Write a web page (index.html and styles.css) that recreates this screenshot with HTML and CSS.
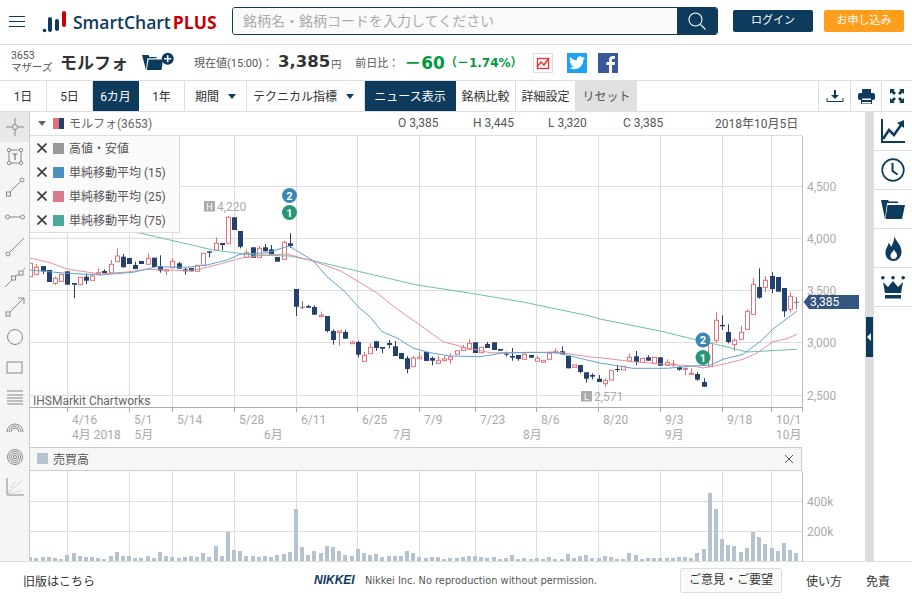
FILE: index.html
```html
<!DOCTYPE html>
<html>
<head>
<meta charset="utf-8">
<title>SmartChart PLUS</title>
<link rel="stylesheet" href="styles.css">
</head>
<body>
<div class="page">

<header class="top">
	<a class="menu" href="#"><span></span><span></span><span></span></a>
	<a class="logo" href="#">
		<svg class="logo-mark" width="26" height="22" viewBox="0 0 26 22">
			<circle cx="3.5" cy="19.5" r="1.8" fill="#0d3b5e"/>
			<rect x="7" y="6" width="4" height="15" rx="2" fill="#0d3b5e"/>
			<rect x="14" y="8" width="4" height="12" rx="2" fill="#0d3b5e"/>
			<rect x="21" y="0" width="4" height="16" rx="2" fill="#c8000a"/>
		</svg>
		<span class="logo-name">SmartChart</span><span class="logo-plus">PLUS</span>
	</a>
	<div class="search">
		<input class="search-input" type="text" placeholder="銘柄名・銘柄コードを入力してください">
		<button class="search-btn">
			<svg width="20" height="20" viewBox="0 0 20 20"><circle cx="8.5" cy="8.5" r="6.5" fill="none" stroke="#fff" stroke-width="1.1"/><path d="M13.5 13.5l5 5" stroke="#fff" stroke-width="1.1"/></svg>
		</button>
	</div>
	<a class="btn btn-login" href="#">ログイン</a>
	<a class="btn btn-apply" href="#">お申し込み</a>
</header>

<section class="info">
	<div class="code"><div>3653</div><div>マザーズ</div></div>
	<div class="name">モルフォ</div>
	<svg class="folder-add" width="33" height="22" viewBox="0 0 33 22">
		<path d="M0 4h6.500l1 2h7v1.300H5.500L4 19z" fill="#0d3b5e"/>
		<path d="M6.500 8.500H21L19.500 19H4.800z" fill="#0d3b5e"/>
		<circle cx="25.700" cy="7.700" r="6" fill="#0d3b5e"/>
		<path d="M22.200 7.700h7M25.700 4.200v7" stroke="#fff" stroke-width="1.500"/>
	</svg>
	<div class="label label-now">現在値(15:00)：</div>
	<div class="price">3,385</div>
	<div class="yen">円</div>
	<div class="label label-prev">前日比：</div>
	<div class="change">－60</div>
	<div class="change-pct">（－1.74%）</div>
	<a class="share share-chart" href="#">
		<svg width="14" height="14" viewBox="0 0 14 14"><rect x="1.5" y="2.5" width="11" height="10" fill="none" stroke="#e33" stroke-width="1.3"/><path d="M1 11l4-5 3 3 5-7" fill="none" stroke="#e33" stroke-width="1.5"/></svg>
	</a>
	<a class="share share-tw" href="#">
		<svg width="16" height="14" viewBox="0 0 24 20"><path d="M24 2.4c-.9.4-1.8.7-2.8.8 1-.6 1.8-1.6 2.2-2.7-1 .6-2 1-3.100 1.200C19.300.7 18 0 16.600 0c-2.700 0-4.900 2.200-4.900 4.900 0 .4 0 .8.100 1.100C7.700 5.800 4.100 3.900 1.700.9c-.4.700-.7 1.600-.7 2.500 0 1.700.900 3.200 2.200 4.100-.8 0-1.600-.2-2.200-.6v.1c0 2.400 1.700 4.400 3.900 4.800-.4.100-.8.200-1.300.2-.3 0-.6 0-.9-.1.600 2 2.400 3.400 4.600 3.400-1.700 1.300-3.800 2.100-6.100 2.100-.4 0-.8 0-1.200-.1 2.200 1.400 4.800 2.200 7.500 2.200 9.100 0 14-7.500 14-14v-.6c1-.7 1.800-1.600 2.500-2.500z" fill="#fff"/></svg>
	</a>
	<a class="share share-fb" href="#">
		<svg width="20" height="20" viewBox="0 0 20 20"><path d="M14 20v-8h2.600l.4-3h-3V7.200c0-.9.300-1.500 1.500-1.500H17V3.100C16.700 3 15.800 3 14.800 3 12.500 3 11 4.300 11 6.800V9H8.400v3H11v8z" fill="#fff"/></svg>
	</a>
</section>

<nav class="tabs">
	<a class="tab tab-s" href="#">1日</a>
	<a class="tab tab-s" href="#">5日</a>
	<a class="tab tab-s is-on" href="#">6カ月</a>
	<a class="tab tab-s" href="#">1年</a>
	<a class="tab tab-period" href="#">期間<i class="caret"></i></a>
	<a class="tab tab-tech" href="#">テクニカル指標<i class="caret"></i></a>
	<a class="tab tab-news is-on" href="#">ニュース表示</a>
	<a class="tab tab-m" href="#">銘柄比較</a>
	<a class="tab tab-m" href="#">詳細設定</a>
	<a class="tab tab-reset" href="#">リセット</a>
	<a class="tab-icon tab-icon-first" href="#">
		<svg width="18" height="14" viewBox="0 0 18 14"><path d="M9 1v7" stroke="#0d3b5e" stroke-width="2"/><path d="M5 6h8l-4 4z" fill="#0d3b5e"/><path d="M1 9v3.500h16V9" fill="none" stroke="#0d3b5e"/></svg>
	</a>
	<a class="tab-icon" href="#">
		<svg width="17" height="15" viewBox="0 0 17 15"><rect x="4" y="0" width="9" height="4" fill="#0d3b5e"/><rect x="0" y="4" width="17" height="7" rx="2" fill="#0d3b5e"/><rect x="3.500" y="9" width="10" height="6" fill="#fff" stroke="#0d3b5e" stroke-width="1"/><rect x="4" y="11" width="9" height="2" fill="#0d3b5e"/></svg>
	</a>
	<a class="tab-icon tab-icon-last" href="#">
		<svg width="14" height="14" viewBox="0 0 14 14" fill="#0d3b5e"><path d="M0 0h5L3.500 1.500 6 4 4 6 1.500 3.500 0 5zM14 0v5l-1.500-1.500L10 6 8 4l2.500-2.500L9 0zM0 14V9l1.500 1.500L4 8l2 2-2.500 2.500L5 14zM14 14H9l1.500-1.500L8 10l2-2 2.500 2.500L14 9z"/></svg>
	</a>
</nav>

<main class="main">
	<aside class="tools">
		<a class="tool is-on" href="#"><svg viewBox="0 0 24 24"><circle cx="12" cy="12" r="2.500"/><path d="M12 3v6.500M12 14.500V21M3 12h6.500M14.500 12H21"/></svg></a>
		<a class="tool" href="#"><svg viewBox="0 0 24 24"><rect x="6" y="5" width="12" height="13"/><circle class="dot" cx="6" cy="5" r="1.700"/><circle class="dot" cx="18" cy="5" r="1.700"/><circle class="dot" cx="6" cy="18" r="1.700"/><circle class="dot" cx="18" cy="18" r="1.700"/><path class="strong" d="M9.500 9h5M12 9v6"/></svg></a>
		<a class="tool" href="#"><svg viewBox="0 0 24 24"><path d="M6.500 17.500l11-11"/><rect class="dot" x="3.500" y="17" width="4" height="4"/><circle class="dot" cx="19" cy="5" r="2"/></svg></a>
		<a class="tool" href="#"><svg viewBox="0 0 24 24"><path d="M6 12h12"/><circle class="dot" cx="4.500" cy="12" r="2"/><circle class="dot" cx="19.500" cy="12" r="2"/></svg></a>
		<a class="tool" href="#"><svg viewBox="0 0 24 24"><path d="M7 17L21 3"/><circle class="dot" cx="5" cy="19" r="2"/></svg></a>
		<a class="tool" href="#"><svg viewBox="0 0 24 24"><path d="M2 22l7-7M12 12l4-3M20 5l2-2"/><rect class="dot" x="8.500" y="11" width="4" height="4"/><rect class="dot" x="16" y="6" width="4" height="4"/></svg></a>
		<a class="tool" href="#"><svg viewBox="0 0 24 24"><path d="M7 17L21 3M15 3h6v6"/><rect class="dot" x="3" y="17" width="4" height="4"/></svg></a>
		<a class="tool" href="#"><svg viewBox="0 0 24 24"><circle cx="12" cy="12" r="7.500"/></svg></a>
		<a class="tool" href="#"><svg viewBox="0 0 24 24"><rect x="4" y="7" width="15" height="11"/></svg></a>
		<a class="tool" href="#"><svg viewBox="0 0 24 24"><path d="M4 6h16M4 10h16M4 13h16M4 16h16M4 19h16"/></svg></a>
		<a class="tool" href="#"><svg viewBox="0 0 24 24"><path d="M4 17a8 8 0 0 1 16 0M6 17a6 6 0 0 1 12 0M8 17a4 4 0 0 1 8 0"/></svg></a>
		<a class="tool" href="#"><svg viewBox="0 0 24 24"><circle cx="12" cy="12" r="7.500"/><circle cx="12" cy="12" r="5.500"/><circle cx="12" cy="12" r="3.500"/><circle cx="12" cy="12" r="1.500"/></svg></a>
		<a class="tool" href="#"><svg viewBox="0 0 24 24"><path d="M4 3v17h17"/><path class="thin" d="M4 20L19 5M4 20l15-5M4 20l8-14"/></svg></a>
	</aside>

	<div class="panel">
		<div class="chart-head">
			<i class="head-caret"></i>
			<span class="head-swatch"><b></b><b></b></span>
			<span class="head-name">モルフォ(3653)</span>
			<span class="ohlc">O 3,385</span>
			<span class="ohlc">H 3,445</span>
			<span class="ohlc">L 3,320</span>
			<span class="ohlc">C 3,385</span>
			<span class="head-date">2018年10月5日</span>
		</div>
		<svg id="price-chart" class="price-chart" width="835" height="311" viewBox="30 136 835 311"></svg>
		<ul class="legend">
			<li><svg class="legend-x" viewBox="0 0 10 10"><path d="M.5.5l9 9M9.500.5l-9 9"/></svg><i class="swatch sw-gray"></i>高値・安値</li>
			<li><svg class="legend-x" viewBox="0 0 10 10"><path d="M.5.5l9 9M9.500.5l-9 9"/></svg><i class="swatch sw-blue"></i>単純移動平均 (15)</li>
			<li><svg class="legend-x" viewBox="0 0 10 10"><path d="M.5.5l9 9M9.500.5l-9 9"/></svg><i class="swatch sw-red"></i>単純移動平均 (25)</li>
			<li><svg class="legend-x" viewBox="0 0 10 10"><path d="M.5.5l9 9M9.500.5l-9 9"/></svg><i class="swatch sw-green"></i>単純移動平均 (75)</li>
		</ul>
		<div class="vol-head">
			<i class="swatch sw-vol"></i><span>売買高</span>
			<svg class="vol-close" width="10" height="10" viewBox="0 0 10 10"><path d="M1 1l8 8M9 1l-8 8" stroke="#555" stroke-width="1"/></svg>
		</div>
		<svg id="vol-chart" class="vol-chart" width="835" height="90" viewBox="30 471 835 90"></svg>
	</div>

	<div class="scroll"><a class="scroll-handle" href="#"></a></div>

	<aside class="side">
		<a class="side-item" href="#">
			<svg width="24" height="24" viewBox="0 0 24 24"><path d="M1 0v23h23" fill="none" stroke="#0d3b5e" stroke-width="2"/><path d="M2 20l6-9 5 5 7-10" fill="none" stroke="#0d3b5e" stroke-width="2.600"/><path d="M16 4l7-3v8z" fill="#0d3b5e"/></svg>
		</a>
		<a class="side-item" href="#">
			<svg width="24" height="24" viewBox="0 0 24 24"><circle cx="12" cy="12" r="10.800" fill="none" stroke="#0d3b5e" stroke-width="1.700"/><path d="M11.500 5v8l5 3.500" fill="none" stroke="#0d3b5e" stroke-width="2"/></svg>
		</a>
		<a class="side-item" href="#">
			<svg width="24" height="19" viewBox="0 0 24 19"><path d="M0 0h7l1 1.500h9V3H6L4 19z" fill="#0d3b5e"/><path d="M6.500 5H24l-3 14H4.500z" fill="#0d3b5e"/></svg>
		</a>
		<a class="side-item" href="#">
			<svg width="17" height="25" viewBox="0 0 17 25"><path fill-rule="evenodd" d="M9 0c1 4 7 8 7.500 15 .3 5-3 10-8 10S0 21 .5 16C.8 12 3 11 3.500 7c1.500 1 2 2.500 2.500 4C8 8 9.500 4 9 0zM8.500 23c2 0 3.500-1.500 3.500-3.500 0-2.500-2-3.500-3-6-1 2.500-3.500 3.500-3.500 6C5.500 21.500 6.500 23 8.500 23z" fill="#0d3b5e"/></svg>
		</a>
		<a class="side-item" href="#">
			<svg width="24" height="23" viewBox="0 0 24 23" fill="#0d3b5e"><circle cx="1.800" cy="1.800" r="1.800"/><circle cx="12" cy="1.800" r="1.800"/><circle cx="22.200" cy="1.800" r="1.800"/><path d="M2 6l5 5 5-6 5 6 5-5-2 11H4z"/><rect x="4" y="19" width="16" height="3.500"/></svg>
		</a>
	</aside>
</main>

<footer class="foot">
	<a class="foot-old" href="#">旧版はこちら</a>
	<span class="nikkei">NIKKEI</span>
	<span class="copy">Nikkei Inc. No reproduction without permission.</span>
	<a class="foot-opinion" href="#">ご意見・ご要望</a>
	<a class="foot-link foot-help" href="#">使い方</a>
	<a class="foot-link foot-terms" href="#">免責</a>
</footer>

</div>
<script src="chart.js"></script>
</body>
</html>
```

FILE: styles.css
```css
*{box-sizing: border-box;}
html,body{margin: 0;padding: 0;}
body{background-color: #fff;color: #333;font-family: Roboto,"Noto Sans CJK JP",sans-serif;font-size: 12px;}
a{color: inherit;text-decoration: none;}
i{font-style: normal;}
.page{width: 912px;height: 599px;display: flex;flex-direction: column;overflow: hidden;}

/* header */
.top{height: 45px;flex: none;display: flex;align-items: center;border-bottom: 1px solid #ddd;padding: 0 8px 1px 9px;}
.menu{width: 16px;display: flex;flex-direction: column;gap: 4px;}
.menu span{display: block;height: 1px;background-color: #0d3b5e;}
.logo{display: flex;align-items: center;margin-left: 16px;width: 191px;}
.logo-mark{flex: none;margin-right: 6px;}
.logo-name{font-family: "Open Sans",sans-serif;font-weight: 600;font-size: 17.500px;color: #0d3b5e;}
.logo-plus{font-family: "Open Sans",sans-serif;font-weight: 700;font-size: 17.500px;color: #c8000a;margin-left: 2px;}
.search{display: flex;width: 486px;height: 28px;margin-top: -1px;border: 1px solid #0d3b5e;border-radius: 3px;overflow: hidden;}
.search-input{flex: 1;min-width: 0;border: none;outline: none;background-color: #fafafa;padding: 0 10px;font-family: Roboto,"Noto Sans CJK JP",sans-serif;font-size: 14px;}
.search-input::placeholder{color: #aaa;opacity: 1;}
.search-btn{width: 40px;border: none;padding: 0;background-color: #0d3b5e;display: flex;align-items: center;justify-content: center;}
.btn{width: 80px;height: 22px;line-height: 21px;text-align: center;border-radius: 2px;color: #fff;font-size: 11px;margin-top: -1px;}
.btn-login{background-color: #0d3b5e;margin-left: 15px;}
.btn-apply{background-color: #ff9e1b;margin-left: 11px;}

/* stock info */
.info{height: 36px;flex: none;display: flex;align-items: center;border-bottom: 1px solid #ddd;padding: 0 0 2px 11px;}
.code{width: 49px;font-size: 10.500px;line-height: 12px;color: #555;}
.name{width: 82px;font-size: 17px;font-weight: 700;color: #333;}
.folder-add{flex: none;margin-top: 1px;}
.label{font-size: 11px;color: #555;}
.label-now{margin-left: 19px;width: 84px;white-space: nowrap;}
.price{font-family: "DejaVu Sans",sans-serif;font-weight: 700;font-size: 16.500px;color: #333;}
.yen{font-size: 10px;color: #555;margin: 3px 0 0 1px;}
.label-prev{margin-left: 14px;width: 49px;white-space: nowrap;}
.change{font-family: "DejaVu Sans","Noto Sans CJK JP",sans-serif;font-weight: 700;font-size: 17px;color: #009a3e;white-space: nowrap;}
.change-pct{font-family: "DejaVu Sans","Noto Sans CJK JP",sans-serif;font-weight: 700;font-size: 12px;color: #009a3e;white-space: nowrap;width: 88px;}
.share{width: 20px;height: 20px;display: flex;align-items: center;justify-content: center;margin: 2px 14px 0 0;flex: none;}
.share-chart{border: 1px solid #ddd;}
.share-tw{background-color: #1da1f2;}
.share-fb{background-color: #3b5998;margin-left: -3px;}

/* tabs */
.tabs{height: 31px;flex: none;display: flex;border-bottom: 1px solid #ddd;}
.tab{display: flex;align-items: center;justify-content: center;border-right: 1px solid #ddd;font-size: 12px;color: #333;padding-bottom: 2px;}
.tab-s{width: 46px;}
.tab-s:first-child{width: 47px;}
.tab-period{width: 62px;}
.tab-tech{width: 118px;padding-right: 4px;}
.tab-news{width: 91px;}
.tab-m{width: 60px;}
.tab-reset{width: 61px;background-color: #e0e0e0;border-right: none;margin-right: auto;color: #555;}
.is-on.tab{background-color: #0d3b5e;color: #fff;border-right-color: #0d3b5e;}
.caret{width: 0;height: 0;margin: 2px 0 0 9px;border-left: 4px solid transparent;border-right: 4px solid transparent;border-top: 5px solid #0d3b5e;}
.tab-icon{width: 31px;border-left: 1px solid #ddd;display: flex;align-items: center;justify-content: center;}
.tab-icon-first{width: 32px;}

/* main area */
.main{flex: 1;min-height: 0;display: flex;}
.tools{width: 30px;flex: none;background-color: #f5f5f5;border-right: 1px solid #ccc;display: flex;flex-direction: column;}
.tool{height: 30px;display: flex;align-items: center;justify-content: center;flex: none;}
.tool.is-on{background-color: #e8e8e8;}
.tool svg{width: 24px;height: 24px;fill: none;stroke: #888;stroke-width: 1;}
.tool .strong{stroke: #777;stroke-width: 1.200;}
.tool .thin{stroke: #bbb;stroke-dasharray: 1 1;}
.tool .dot{fill: #f5f5f5;}

.panel{width: 835px;flex: none;position: relative;display: flex;flex-direction: column;}
.chart-head{width: 772px;height: 24px;flex: none;display: flex;align-items: center;border-bottom: 1px solid #ddd;color: #666;padding: 0 0 2px 8px;}
.head-caret{width: 0;height: 0;margin-top: 2px;border-left: 4px solid transparent;border-right: 4px solid transparent;border-top: 5px solid #666;}
.head-swatch{display: flex;margin: 2px 0 0 7px;}
.head-swatch b{display: block;width: 6px;height: 11px;background-color: #e0707a;}
.head-swatch b + b{width: 5px;background-color: #23406e;}
.head-name{margin-left: 5px;width: 329px;}
.ohlc{width: 75px;color: #555;}
.ohlc:nth-of-type(6){width: 92px;}
.head-date{color: #555;white-space: nowrap;}
.price-chart,.vol-chart{display: block;flex: none;}

.legend{position: absolute;left: 0;top: 24px;width: 150px;height: 97px;margin: 0;padding: 0;list-style: none;background-color: #fafafa;border-right: 1px solid #ddd;border-bottom: 1px solid #ddd;color: #555;}
.legend li{height: 24px;display: flex;align-items: center;padding-bottom: 2px;}
.legend-x{width: 10px;height: 10px;flex: none;margin: 2px 6px 0 7px;fill: none;stroke: #444;stroke-width: 1.800;}
.swatch{display: block;width: 11px;height: 11px;margin-right: 5px;flex: none;}
.legend .swatch{margin-top: 2px;}
.sw-gray{background-color: #999;}
.sw-blue{background-color: #4a90c0;}
.sw-red{background-color: #d87a8c;}
.sw-green{background-color: #4aa89c;}
.sw-vol{background-color: #b4c3cf;}
.vol-head{width: 772px;height: 24px;flex: none;display: flex;align-items: center;background-color: #f6f6f6;border: 1px solid #ccc;border-left: none;padding: 0 0 1px 7px;color: #555;}
.vol-close{margin-left: auto;margin-right: 7px;}

/* chart parts, drawn by chart.js */
.grid{stroke: #ddd;stroke-width: 1;}
.axis{stroke: #aaa;stroke-width: 1;}
.edge{stroke: #bbb;stroke-width: 1;}
.axis-text{font-size: 12px;fill: #aaa;}
.credit{font-size: 12px;fill: #666;}
.wick-n{stroke: #23406e;stroke-width: 1;}
.wick-r{stroke: #e0707a;stroke-width: 1;}
.wick-d{stroke: #777;stroke-width: 1;}
.body-n{fill: #23406e;}
.body-r{fill: #fff;stroke: #e0707a;stroke-width: 1;}
.ma{fill: none;stroke-width: 1;}
.ma-blue{stroke: #5fa3d2;}
.ma-red{stroke: #e4929f;}
.ma-green{stroke: #6cc0ae;}
.tag-box{fill: #aaa;}
.tag-letter{font-size: 9px;fill: #fff;text-anchor: middle;}
.badge-blue{fill: #3a87b0;}
.badge-green{fill: #2a9478;}
.badge-text{font-size: 11px;font-weight: 700;fill: #fff;text-anchor: middle;}
.last-box{fill: #34557f;}
.last-text{font-size: 12px;fill: #fff;}
.vol-bar{fill: #b4c3cf;}

/* right side */
.scroll{width: 9px;flex: none;background-color: #ddd;position: relative;}
.scroll-handle{position: absolute;left: 1px;top: 205px;width: 7px;height: 40px;background-color: #0d3b5e;}
.scroll-handle:after{content: "";position: absolute;left: 1px;top: 16px;border-top: 4px solid transparent;border-bottom: 4px solid transparent;border-right: 4px solid #fff;}
.side{flex: 1;display: flex;flex-direction: column;}
.side-item{height: 39px;flex: none;display: flex;align-items: center;justify-content: center;border-bottom: 1px solid #ddd;}

/* footer */
.foot{height: 38px;flex: none;display: flex;align-items: center;border-top: 1px solid #ddd;padding: 0 0 1px 23px;color: #333;}
.foot-old{width: 291px;}
.nikkei{font-family: "Liberation Sans",sans-serif;font-weight: 700;font-style: italic;font-size: 12px;color: #0d3b5e;width: 51px;}
.copy{font-family: "DejaVu Sans",sans-serif;font-size: 9.800px;color: #555;width: 315px;white-space: nowrap;}
.foot-opinion{width: 102px;height: 25px;line-height: 22px;text-align: center;background-color: #fafafa;border: 1px solid #ddd;border-radius: 2px;}
.foot-help{margin-left: 24px;}
.foot-terms{margin-left: 24px;}
```

FILE: chart.js
```js
window.onload = function() {
	var NS = 'http://www.w3.org/2000/svg';
	var price = document.getElementById('price-chart');
	var vol = document.getElementById('vol-chart');

	// x of trading day i, in page pixels
	function dayX(i) {
		return 30.3 + 6.177 * i;
	}

	function add(svg, name, attrs, text) {
		var el = document.createElementNS(NS, name);
		for (var k in attrs) {
			el.setAttribute(k, attrs[k]);
		}
		if (text) {el.textContent = text;}
		svg.appendChild(el);
		return el;
	}

	function line(svg, cls, x1, y1, x2, y2) {
		return add(svg, 'line', {'class': cls, x1: x1, y1: y1, x2: x2, y2: y2});
	}

	function label(svg, cls, x, y, text) {
		return add(svg, 'text', {'class': cls, x: x, y: y, 'dominant-baseline': 'central'}, text);
	}

	var gridX = [67.5, 129.5, 172.5, 234.5, 296.5, 357.5, 419.5, 475.5, 536.5, 598.5, 660.5, 722.5, 771.5];
	var dayLabels = ['4/16', '5/1', '5/14', '5/28', '6/11', '6/25', '7/9', '7/23', '8/6', '8/20', '9/3', '9/18', '10/1'];
	var monthLabels = [['4月 2018', 72], ['5月', 134.5], ['6月', 264], ['7月', 393], ['8月', 523], ['9月', 665], ['10月', 776]];
	var priceLabels = [['4,500', 186.5], ['4,000', 238.5], ['3,500', 290.5], ['3,000', 342.5], ['2,500', 395.5]];

	priceLabels.forEach(function(p) {
		line(price, 'grid', 30, p[1], 802, p[1]);
		label(price, 'axis-text', 807, p[1], p[0]);
	});
	gridX.forEach(function(x, i) {
		line(price, 'grid', x, 136, x, 407);
		line(price, 'axis', x, 407, x, 412);
		label(price, 'axis-text', x + 4.5, 419.5, dayLabels[i]);
	});
	monthLabels.forEach(function(m) {
		label(price, 'axis-text', m[1], 435, m[0]);
	});
	line(price, 'axis', 30, 407.5, 802.5, 407.5);
	line(price, 'edge', 802.5, 136, 802.5, 412);
	label(price, 'credit', 33, 401, 'IHSMarkit Chartworks');

	// body top, body bottom, wick top, wick bottom, kind (n down, r up, d doji)
	var candles = [
		[263.3,276.7,263.3,276.7,'r'],[267.3,274.7,264,274.7,'r'],[266,271.3,266,274,'n'],[270,282,270,282,'n'],[278.3,283.3,276.7,285,'r'],
		[274.3,281.3,274.3,281.3,'r'],[271.3,284.7,271.3,284.7,'n'],[283,284.7,283,298.3,'n'],[277.3,284.7,277.3,284.7,'r'],[276.7,280.7,273.3,284,'n'],
		[276,280.3,273.3,280.3,'r'],[272.7,274.3,268.3,274.3,'r'],[271,273,269.3,273,'n'],[264.3,272.7,260,272.7,'r'],[256,261.7,248.3,261.7,'r'],
		[256.7,267.3,254,267.3,'n'],[258,264,258,264,'n'],[265,269,261.7,269,'n'],[261,264,261,264,'n'],[258.3,264.3,253.3,264.3,'r'],
		[257.7,267,257.7,267,'n'],[266,270.7,255.3,272.7,'n'],[269.3,271,269.3,275.3,'r'],[261.3,267.7,258.3,267.7,'r'],[263.3,268.7,261.7,268.7,'n'],
		[269.3,271.3,267.7,274.7,'n'],[268,271.3,268,271.3,'n'],[265.3,271.3,265.3,271.3,'r'],[253.3,265.3,253.3,265.3,'r'],[251.3,252.7,251.3,257.3,'n'],
		[243.3,250,237.3,250,'r'],[243,245,243,250,'n'],[217.3,243.7,216,243.7,'r'],[217.3,230,217.3,230,'n'],[231,246.7,231,248.3,'n'],
		[252.7,257.3,249.3,257.3,'r'],[247.3,257.7,247.3,257.7,'n'],[248.3,257.3,246,257.3,'r'],[247.3,251.3,244,251.3,'n'],[249.3,254,245,254,'n'],
		[257,261.7,257,261.7,'n'],[242.3,259.3,240.7,259.3,'r'],[243.3,246,233.3,248,'n'],[289,306.7,289,316,'n'],[307.3,307.3,301,309,'d'],
		[306,307.7,304.7,307.7,'n'],[307,314.7,305.3,314.7,'n'],[315.3,316.7,311.7,316.7,'r'],[316,331,316,332.3,'n'],[331,340,329.3,344.7,'n'],
		[331,332.7,331,345.7,'r'],[332,338.7,330,338.7,'n'],[342,343.7,340.7,343.7,'r'],[342,354.7,340.7,357.3,'n'],[355.3,361.3,351.7,361.3,'r'],
		[347.3,353.7,343.3,353.7,'r'],[341.3,348,341.3,350.7,'n'],[347,348.7,347,353.3,'n'],[343,345,340,348.3,'n'],[346.3,356,341,356,'n'],
		[353,359,353,359,'n'],[358.3,369,356,373.3,'n'],[358,366.7,356,366.7,'r'],[357,358.7,351.7,358.7,'r'],[352,361,352,361,'n'],
		[358,360.7,356.7,365.3,'n'],[360.3,363.3,355.7,363.3,'r'],[359,360.7,356,360.7,'r'],[357,359.7,353.3,363.7,'r'],[350.7,354.3,350.7,354.3,'r'],
		[347.7,350.3,345,350.3,'r'],[343.3,349.3,339.3,349.3,'r'],[342.3,353,342.3,353,'n'],[347.3,352.7,347.3,352.7,'r'],[344,348,342,348,'n'],
		[342.3,350,342.3,350,'n'],[349,350.7,349,350.7,'n'],[353.7,354.7,351.7,356.7,'n'],[356,357.7,348,360.7,'n'],[355,359,355,360.7,'n'],
		[354.3,359.3,351.7,359.3,'r'],[355,357.7,355,357.7,'n'],[358.3,361.3,356,361.3,'r'],[360.3,362.3,360.3,362.3,'r'],[353.3,359.3,351.7,359.3,'r'],
		[351.3,353,348.3,353,'r'],[351.3,354.3,346.3,354.3,'n'],[356,368.3,356,368.3,'n'],[365,367.3,365,367.3,'r'],[365,372,365,373.3,'n'],
		[372.3,378.7,372.3,382.7,'n'],[375,376.7,373.3,379.3,'n'],[378.7,382,375,382,'n'],[380.3,383.7,378.3,386.7,'r'],[370.3,380,370.3,380,'r'],
		[369,370,365,372,'n'],[366.3,370,366.3,370,'r'],[357.3,361,353.3,361,'r'],[356.3,362,351,365.3,'n'],[358.3,362.3,358.3,362.3,'r'],
		[357.3,360.7,355.3,360.7,'n'],[357.3,363.3,357.3,363.3,'r'],[357.3,365.7,357.3,365.7,'n'],[362.3,365.3,359.3,365.3,'r'],[364,365,360,367.3,'r'],
		[366.7,369.7,366.7,370.7,'n'],[368.3,369.3,368.3,375,'r'],[373.3,374.3,368.3,374.3,'r'],[374,379.7,372,380.7,'n'],[382,386.7,378.3,386.7,'n'],
		[343.3,366.7,343.3,366.7,'r'],[320.3,340.3,312.3,343.3,'r'],[325,326.3,315.3,330,'n'],[332,342,324.3,343.3,'n'],[340.3,344.7,338.3,351,'r'],
		[332.3,339.3,326,339.3,'r'],[311.3,329.3,309.3,329.3,'r'],[284.3,314.3,278.3,314.3,'r'],[287,297.7,268.3,298.7,'n'],[280.3,287.3,276,292.3,'r'],
		[276,289,272.3,293.3,'n'],[277,291.7,277,291.7,'n'],[288,311.3,288,316.7,'n'],[296.3,309.3,292.3,312.7,'r'],[302.3,302.3,297,309.3,'d']
	];

	candles.forEach(function(c, i) {
		var x = Math.round(dayX(i)) + 0.5;
		line(price, 'wick-' + c[4], x, c[2], x, c[3]);
		if (c[4] == 'd') {
			line(price, 'wick-d', x - 2.5, c[0], x + 2.5, c[0]);
		} else if (c[4] == 'n') {
			add(price, 'rect', {'class': 'body-n', x: x - 2.5, y: c[0], width: 5, height: c[1] - c[0]});
		} else {
			add(price, 'rect', {'class': 'body-r', x: x - 2, y: c[0], width: 4, height: c[1] - c[0]});
		}
	});

	var maGreen = '130,232 140,233 173,240.7 213,250 253,255 290,256 313,260.7 357,271 417,285 463,292 523,302 590,316 600,319 660,331 697,340 723,346 747,352 760,351.3 797,349.3';
	var maRed = '30,258 50,262.7 67,269 100,274 127,272 147,269.3 187,270.7 200,269 220,264 240,258.3 263,255 287,254 313,261 340,270.7 357,280.7 377,293 397,309 420,325 443,341.7 463,347 490,352.7 523,352.7 557,352 590,357 600,357.7 633,361.7 667,364.3 693,366 703,368 723,364.3 743,359.3 757,353 773,341.7 787,338.7 797,334.3';
	var maBlue = '30,270 67,273.3 100,275 133,272.3 157,266.7 187,267.3 207,265 227,260 240,254.3 267,252.7 289,246 313,260.7 327,276.7 345,291.7 358,306.7 370,316.7 382,331.7 397,338 413,348 430,352.7 450,356 480,356.7 503,353 530,352.3 557,352.7 590,360.7 600,363 633,368.3 667,368.3 693,366 710,365.3 723,359.3 743,354.3 760,341.7 773,329 797,311';
	add(price, 'polyline', {'class': 'ma ma-green', points: maGreen});
	add(price, 'polyline', {'class': 'ma ma-red', points: maRed});
	add(price, 'polyline', {'class': 'ma ma-blue', points: maBlue});

	function tag(letter, x, y, value) {
		add(price, 'rect', {'class': 'tag-box', x: x, y: y, width: 11, height: 10.5});
		label(price, 'tag-letter', x + 5.5, y + 5.5, letter);
		label(price, 'axis-text', x + 13, y + 5.5, value);
	}
	tag('H', 204, 201, '4,220');
	tag('L', 581, 391, '2,571');

	function badge(cls, x, y, text) {
		add(price, 'circle', {'class': cls, cx: x, cy: y, r: 7.5});
		label(price, 'badge-text', x, y + 0.5, text);
	}
	badge('badge-blue', 289.5, 195.5, '2');
	badge('badge-green', 289.5, 212.5, '1');
	badge('badge-blue', 703, 340, '2');
	badge('badge-green', 703, 357.5, '1');

	add(price, 'polygon', {'class': 'last-box', points: '803.5,302 809,295 859,295 859,309 809,309'});
	label(price, 'last-text', 810, 302, '3,385');

	// volume pane
	var volumes = [
		4,3,4,4,3,2,6,8,5,4,4,3,2,5,9,5,5,3,3,5,3,9,5,4,3,4,5,4,8,4,15,5,29,11,10,5,5,4,5,4,6,7,9,52,14,6,10,8,15,14,10,6,5,12,8,6,7,4,5,5,5,10,8,4,3,4,4,2,3,
		3,4,5,5,4,3,4,2,3,6,2,3,2,3,2,4,2,2,7,3,5,6,3,3,5,4,2,2,8,6,2,3,3,3,3,3,4,4,3,8,12,68,52,22,16,15,9,13,29,24,17,13,10,18,11,8
	];
	[501.5, 531.5].forEach(function(y) {
		line(vol, 'grid', 30, y, 802, y);
	});
	gridX.forEach(function(x) {
		line(vol, 'grid', x, 471, x, 561);
	});
	volumes.forEach(function(h, i) {
		add(vol, 'rect', {'class': 'vol-bar', x: Math.round(dayX(i)) - 2, y: 561 - h, width: 4, height: h});
	});
	line(vol, 'edge', 802.5, 471, 802.5, 561);
	label(vol, 'axis-text', 807, 501.5, '400k');
	label(vol, 'axis-text', 807, 531.5, '200k');
};
```
